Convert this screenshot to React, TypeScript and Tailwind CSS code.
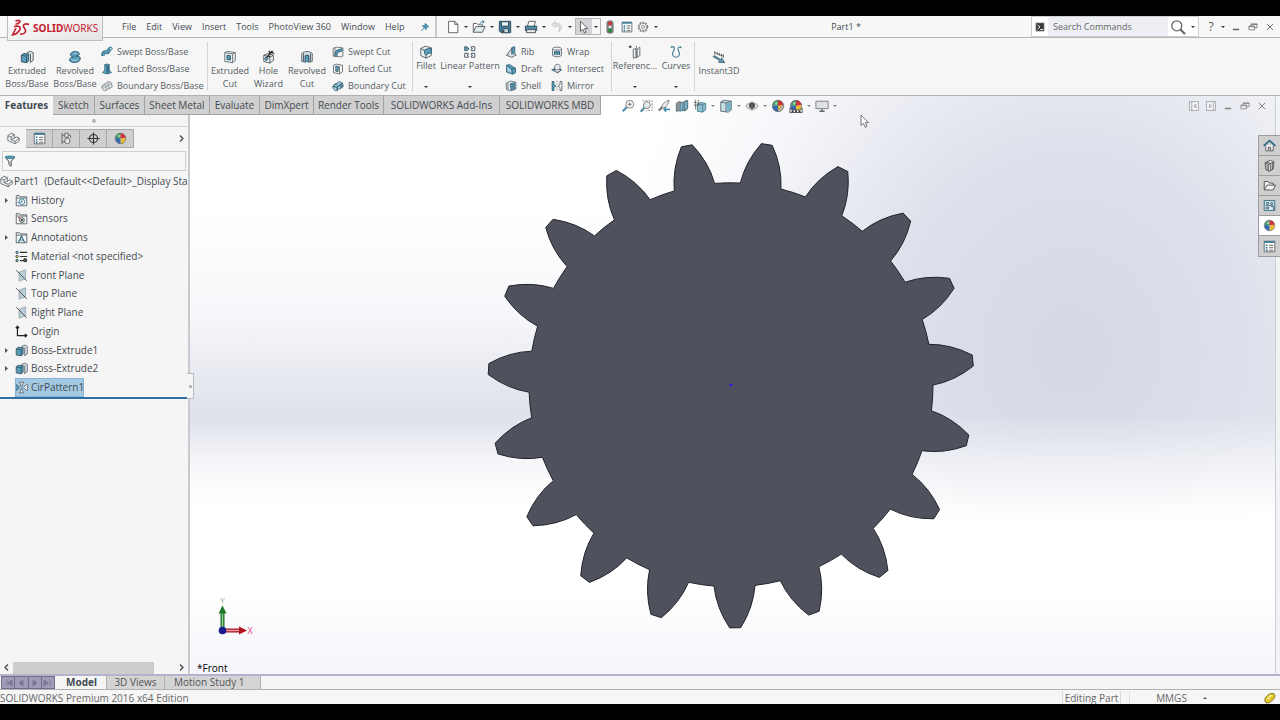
import React from "react";

type IconProps = { className?: string };
type Icon = (p: IconProps) => React.ReactElement;

const BLUE = "#5b9db8";
const DARK = "#3c4a54";

function icon(children: React.ReactNode): Icon {
  return function Glyph({ className = "size-4" }: IconProps) {
    return (
      <svg viewBox="0 0 16 16" className={`shrink-0 ${className}`} fill="none" stroke={DARK} strokeWidth="1" aria-hidden="true">
        {children}
      </svg>
    );
  };
}

/* ---------- feature icons ---------- */
const ExtrudeIcon = icon(
  <>
    <path d="M8 3l4-1.500 3 1.500v9l-4 2.500" fill="#eef2f4" />
    <path d="M12 4v9" />
    <path d="M1.500 6l2.500-2 6 .5v8L7.500 14.500l-6-1z" fill={BLUE} />
    <path d="M1.500 6l6 1 2.500-2.500M7.500 7v7.500" stroke="#24586f" />
  </>,
);
const RevolveIcon = icon(
  <>
    <path
      d="M3 4C5 1 12 1 13 4c.5 2-2 2.500-4 3 3-.5 5.500.5 5 3.500-.6 4-8.500 5-12 2C.500 10.500 3 8.500 6 8 3.500 7.500 2 6 3 4z"
      fill={BLUE}
      stroke="#24586f"
    />
    <path d="M6 4.500c1.500-1 3.500-1 4.500 0M4 11c2 1.500 6 1.500 7.500-1" stroke="#c4e0ea" />
  </>,
);
const SweepIcon = icon(
  <>
    <path d="M3 13C2 8.500 5.500 7.500 8 8.500s1-5 5.500-5.500" stroke="#2f6c86" strokeWidth="5" />
    <path d="M3 12.500C3 8.500 5.500 8 8 8.500s1-5 5-5.500" stroke={BLUE} strokeWidth="3" />
    <circle cx="13" cy="3.500" r="2" fill="#b9dbe6" stroke="#2f6c86" />
  </>,
);
const LoftIcon = icon(
  <>
    <path d="M5 2h6v6c0 2 1 3 3 4.500-3 2.500-9 2.500-12 0C4 11 5 10 5 8z" fill={BLUE} stroke="#2f5d73" />
    <path d="M9 3v10" stroke="#2f6c86" strokeWidth="3" />
    <ellipse cx="8" cy="2.500" rx="3" ry="1" fill="#a9d0de" stroke="#2f5d73" />
  </>,
);
const BoundaryIcon = icon(
  <>
    <path d="M1 9c1-4 5-3 7-6 1-1 4-1 6 1l1 5c-3 3-6 2-8 5-2 1-5 0-6-5z" fill="#dfe5e8" stroke="#6b747a" />
    <path d="M1 9c2-1 4 1 6 0 3-3 5-2 7-5M7 9v5M10 6.500l1 5M4 6l3 1 4-4" stroke="#7d878c" />
  </>,
);
const CutIcon = icon(
  <>
    <path d="M2 3l3-1.500L14 3v9l-3 2.500-9-1.500z" fill="#f3f5f6" stroke="#5c666d" />
    <path d="M2 3l9 1.500L14 3M11 4.500v10" stroke="#5c666d" />
    <path d="M4.500 6l4 .5v5l-4-.5z" fill={BLUE} stroke="#24586f" />
  </>,
);
const HoleIcon = icon(
  <>
    <path d="M2 6l5-2 6 2v6l-4 3-7-2z" fill="#e9edef" stroke="#4d575e" />
    <path d="M2 6l7 2 4-2M9 8v7" stroke="#4d575e" />
    <path d="M5 9l6-7M8 1l1 2M12 1l-1 2 3 1M7 6l2 2" stroke="#222" strokeWidth="1.500" />
    <circle cx="5" cy="10" r="1.700" fill={BLUE} stroke="#24586f" />
  </>,
);
const RevCutIcon = icon(
  <>
    <path d="M2 4c3-3 9-3 12 0v9l-4 1V6H6v8l-4-1z" fill="#cfe1e8" stroke="#4d575e" />
    <path d="M6 14V7l2-1 2 1v7" fill={BLUE} stroke="#24586f" />
    <path d="M4 4v9M12 4v9" stroke="#4d575e" />
  </>,
);
const SweptCutIcon = icon(
  <>
    <path d="M1.500 3l5-1.500 8 1v11l-3 1-10-1z" fill="#eef1f2" stroke="#4d575e" />
    <path d="M5 14c0-5 1-8 9-9" stroke="#24586f" strokeWidth="4" />
    <path d="M5 14c0-5 1-8 9-9" stroke={BLUE} strokeWidth="2" />
    <path d="M4 3v10" stroke="#4d575e" />
  </>,
);
const LoftCutIcon = icon(
  <>
    <path d="M2 3l4-1.500L14 3v9l-4 2.500-8-1.500z" fill="#f3f5f6" stroke="#4d575e" />
    <path d="M5 4l4 .5-1 7-3-.5zM10 4.500v10" fill={BLUE} stroke="#4d575e" />
  </>,
);
const BoundCutIcon = icon(
  <>
    <path d="M1 9c1-4 5-3 7-6 1-1 4-1 6 1l1 5c-3 3-6 2-8 5-2 1-5 0-6-5z" fill="#a6ccd9" stroke="#3a5a69" />
    <path d="M1 9c2-1 4 1 6 0 3-3 5-2 7-5M7 9v5M3 6l4-1M11 10l3-3" stroke="#24586f" strokeWidth="1.500" />
  </>,
);
const FilletIcon = icon(
  <>
    <path d="M2 4l5-2.500L14 3v9l-6 3-6-3z" fill="#eef1f2" stroke="#4d575e" />
    <path d="M6 6c2-2 6-2 8-2v5c-2 0-5 1-6 3-1-1-2-3-2-6z" fill={BLUE} stroke="#24586f" />
    <path d="M2 4l4 2M8 12v3" />
  </>,
);
const PatternIcon = icon(
  <>
    <path d="M2 2h2l3 2.300L4 6.500H2z" fill={BLUE} />
    <path d="M9.500 2h4v4.500h-4V5l1.500-.7-1.500-.8zM2 9.500h4V11l-1.500.7L6 12.500V14H2zM9.500 9.500h4V14h-4v-1.500l1.500-.8-1.500-.7z" fill="#fff" />
  </>,
);
const RibIcon = icon(
  <>
    <path d="M9 2l4-1v10l-4 3z" fill={BLUE} stroke="#24586f" />
    <path d="M9 3L3 11l6 3z" fill="#cfe1e8" />
    <path d="M1 12l8 3 6-3-2-1" fill="#dfe5e8" />
  </>,
);
const DraftIcon = icon(
  <>
    <path d="M2 3l4-1 8 5v6l-4 2-8-3z" fill={BLUE} stroke="#24586f" />
    <path d="M2 3l7 5 5-1M9 8l1 7" stroke="#24586f" />
    <path d="M3 4.500l5 4 .500 4.500L3 11z" fill="#a9d0de" stroke="none" />
  </>,
);
const ShellIcon = icon(
  <>
    <path d="M1.500 4l6-2.500L14.500 3v9L8 14.500l-6-2z" fill="#eef1f2" stroke="#4d575e" />
    <path d="M7 5l6-1.500v8L8 13z" fill={BLUE} stroke="#24586f" />
    <path d="M4 4v9M9 5l2 5" stroke="#4d575e" />
  </>,
);
const WrapIcon = icon(
  <>
    <path d="M2 3.500v9c2 2.500 10 2.500 12 0v-9" fill="#dfe5e8" stroke="#4d575e" />
    <ellipse cx="8" cy="3.500" rx="6" ry="2" fill="#f6f7f8" stroke="#4d575e" />
    <path d="M4 8h8M5 8v4M8 8v4M11 8v4" stroke="#2f6c86" strokeWidth="2" />
  </>,
);
const IntersectIcon = icon(
  <>
    <path d="M1 9l5-2 8 2-5 4z" fill={BLUE} stroke="#24586f" />
    <path d="M5 11V4c1-3 7-3 7 0v7c-2 1.500-5 1.500-7 0z" fill="#e9edef" stroke="#4d575e" />
    <path d="M5 8c2 1.500 5 1.500 7 0" stroke="#4d575e" />
  </>,
);
const MirrorIcon = icon(
  <>
    <path d="M1.500 2v12H4v-4l2.500-2L4 6V2z" fill={BLUE} stroke="#24586f" />
    <path d="M14.500 2v12H12v-4L9.500 8 12 6V2z" fill="#fff" />
    <path d="M8 1v14" strokeDasharray="2 1.500" stroke="#777" />
  </>,
);
const RefIcon = icon(
  <>
    <path d="M1 2h3M2.500.500v3" strokeWidth="1.500" />
    <path d="M6 5l3-1v10l-3 1zM10.500 4.500l3-2v9.500l-3 2z" stroke="#59636a" />
    <path d="M9.700 1v14" stroke="#59636a" strokeDasharray="2 1" />
  </>,
);
const CurvesIcon = icon(
  <path d="M2 2c5-1 5 2 3 5s-1 7 3 7 5-4 3-7 0-5 3-5M2 2l1.500 1M14 2l-1 1.500" stroke="#4b7f97" strokeWidth="1.300" />,
);
const InstantIcon = icon(
  <>
    <path d="M3 1.500v3.500M13 5v4M3 3l10 4M6 2.500v3M8.500 3.500v3M11 4.500v3" stroke="#555" />
    <path d="M1 7.500l8 4.500-1.500 2 7 .5-3.500-5.500-1 2L3 6.500z" fill={BLUE} stroke="#3a5a69" />
  </>,
);

/* ---------- title bar icons ---------- */
const PinIcon = icon(
  <>
    <path d="M8.500 2l5.500 5.500-2 .5-2 2 0 2.500L3.500 6H6l2-2z" fill="#4b93b4" stroke="#2f7393" />
    <path d="M6 10l-4 4" stroke="#2f7393" strokeWidth="1.500" />
  </>,
);
const NewIcon = icon(<path d="M3 1.500h7l3.500 3.500v9.500H3zM10 1.500V5h3.500" fill="#fff" stroke="#555" />);
const OpenIcon = icon(
  <>
    <path d="M1.500 14V4h4l1.500 1.500h5V8" fill="#fff" stroke="#555" />
    <path d="M1.500 14l3-6.500H15L12 14z" fill="#e2ecef" stroke="#4d575e" />
    <path d="M9 5c0-2.500 2-3 4-3M11.500.5L14 2l-2 2" stroke="#2f7393" />
  </>,
);
const SaveIcon = icon(
  <>
    <path d="M1.500 1.500h13v13h-11l-2-2z" fill="#3f7f9b" stroke="#2b4655" />
    <path d="M4 2h8v5H4z" fill="#e8f0f3" stroke="#2b4655" />
    <path d="M5 10h7v4.500H5z" fill="#cfd8dc" stroke="#2b4655" />
    <path d="M6.500 11v3" stroke="#2b4655" strokeWidth="1.500" />
  </>,
);
const PrintIcon = icon(
  <>
    <path d="M4 7l1.500-5.500H13L11.500 7" fill="#fff" stroke="#555" />
    <path d="M1.500 7h13v5h-13z" fill="#4b8eaa" stroke="#2b4655" />
    <path d="M3 11h10v3.500H3z" fill="#e8eef0" stroke="#444" />
  </>,
);
const UndoIcon = icon(<path d="M6 1.500L2 5l4 3.500V6.500c5-.5 6 2 4 7 5-4 4-10-4-9.500z" fill="#e3e4e6" stroke="#c0c2c6" />);
const ArrowIcon = icon(
  <path d="M4 1.500v11.500l2.700-2.500L8.500 15l2-1-1.900-4.200H12.500z" fill="#fff" stroke="#555" />,
);
const TrafficIcon = icon(
  <>
    <rect x="4.500" y="1" width="7" height="14" rx="2.500" fill="#8b9094" stroke="#666" />
    <circle cx="8" cy="4" r="2.200" fill="#cf2f2f" stroke="none" />
    <circle cx="8" cy="8" r="1.500" fill="#e8e8e8" stroke="none" />
    <circle cx="8" cy="12" r="2.200" fill="#1f8a3c" stroke="none" />
  </>,
);
const ListIcon = icon(
  <>
    <path d="M1.500 1.500h13v13h-13z" fill="#fff" stroke="#4d575e" />
    <path d="M1.500 2.500h13" stroke="#2f7393" strokeWidth="2" />
    <path d="M3.500 6.500h2M3.500 9.500h2M3.500 12.500h2" stroke="#2f7393" strokeWidth="2" />
    <path d="M7.500 6.500h5M7.500 9.500h5M7.500 12.500h5" stroke="#444" />
  </>,
);
const GearIcon = icon(
  <>
    <circle cx="8" cy="8" r="6.300" stroke="#777" strokeWidth="1.500" strokeDasharray="2.500 1.500" />
    <circle cx="8" cy="8" r="5" stroke="#777" />
    <circle cx="8" cy="8" r="2" stroke="#777" />
  </>,
);
const PromptIcon = icon(
  <>
    <path d="M1.500 1.500h13v13h-13z" fill="#3a3a3a" stroke="#888" />
    <path d="M4 4.500L8 8l-4 3.500M8.500 12H13" stroke="#fff" strokeWidth="1.500" />
  </>,
);
const SearchIcon = icon(
  <>
    <circle cx="6.800" cy="6.800" r="5" stroke="#666" strokeWidth="1.300" fill="#fff" />
    <path d="M10.500 10.500l4.500 4.500" stroke="#666" strokeWidth="2.200" />
  </>,
);
const MinIcon = icon(<path d="M3 12h10" stroke="#666" strokeWidth="2.500" />);
const RestoreIcon = icon(<path d="M1.500 6.500h9v6h-9zM5 6.500V3h9.500v6h-4M1.500 7.500h9M5 4h9.500" stroke="#666" strokeWidth="1.200" />);
const CloseIcon = icon(<path d="M3 3l10 10M13 3L3 13" stroke="#666" strokeWidth="1.500" />);
const DockLeftIcon = icon(<path d="M2 2h12v12H2zM5 2v12M10.500 5.500L8 8l2.500 2.500z" stroke="#888" fill="#f4f4f6" />);
const DockRightIcon = icon(<path d="M2 2h12v12H2zM11 2v12M6 5.500L8.500 8 6 10.500z" stroke="#888" fill="#f4f4f6" />);

/* ---------- heads-up icons ---------- */
const ZoomFitIcon = icon(
  <>
    <circle cx="10" cy="6" r="4.500" fill="#f5f5f5" stroke="#777" />
    <path d="M6.500 9.500L2 14" stroke="#4f8ea9" strokeWidth="2.500" />
    <path d="M8 6h4M10 4v4" stroke="#666" />
  </>,
);
const ZoomAreaIcon = icon(
  <>
    <path d="M4 2h11v11H8" stroke="#777" strokeDasharray="2 1.500" />
    <circle cx="9" cy="7" r="4" fill="#dce9ee" stroke="#777" />
    <path d="M6 10l-4 4.500" stroke="#4f8ea9" strokeWidth="2.500" />
  </>,
);
const PrevViewIcon = icon(
  <>
    <path d="M14 1.500C10 2 6 6 5 9l3 1c2-1 5-4 6-8.500z" fill="#eee" stroke="#777" />
    <path d="M6 9.500L2 13" stroke="#777" strokeWidth="2.500" />
    <path d="M15 12H8m2.500-2.500L8 12l2.500 2.500" stroke="#3f89a8" strokeWidth="1.600" />
  </>,
);
const SectionIcon = icon(
  <>
    <path d="M1.500 5l3-2 4 1 5-2.500 1 .5v9l-3 2.500-4-.5-6 1z" fill="#8b979e" stroke="#59636a" />
    <path d="M6 5l3-1v9l-3 1zM11 4l3-2v8.500L11 13z" fill="#86bdd1" stroke="#4d7f94" />
  </>,
);
const OrientIcon = icon(
  <>
    <path d="M5 5.500L8 4l6.500 1v7.500L11 15l-6-1z" fill="#8fc1d3" stroke="#4d7f94" />
    <path d="M5 5.500l6 1 3.500-1.500M11 6.500V15" stroke="#4d7f94" />
    <path d="M1 7h7M1 4h3M6 1v6M3 1v11" stroke="#666" />
  </>,
);
const DisplayIcon = icon(
  <>
    <path d="M2 3.500L5 1.500l9 1v10L10.500 15 2 14z" fill="#c5dfe8" stroke="#59636a" />
    <path d="M2 3.500l6 1 6-2M8 4.500V15" stroke="#59636a" />
    <path d="M8.500 5l5-2v9.500L8.500 14z" fill="#74b1c9" stroke="none" />
  </>,
);
const EyeIcon = icon(
  <>
    <path d="M1 8c3-5 11-5 14 0-3 5-11 5-14 0z" fill="#e6e6e6" stroke="#888" />
    <circle cx="8" cy="7.500" r="3" fill="#555" stroke="#444" />
    <path d="M8 3v10" stroke="#666" />
  </>,
);
const ball = (
  <>
    <path d="M8 8V1.500A6.500 6.500 0 0 0 1.800 7z" fill="#3e9c5c" stroke="none" />
    <path d="M8 8V1.500A6.500 6.500 0 0 1 14.300 7z" fill="#d5333b" stroke="none" />
    <path d="M8 8l6.300-1A6.500 6.500 0 0 1 8 14.500z" fill="#e8bd35" stroke="none" />
    <path d="M8 8L1.800 7A6.500 6.500 0 0 0 8 14.500z" fill="#3569b2" stroke="none" />
    <circle cx="8" cy="8" r="6.500" stroke="#555" strokeWidth=".700" />
    <circle cx="6" cy="5" r="1.500" fill="#fff" fillOpacity=".5" stroke="none" />
  </>
);
const BallIcon = icon(ball);
const AppearanceIcon = icon(
  <>
    {ball}
    <path d="M15 8l-5 6-2 .5.5-2 5-5.500z" fill="#d9dee0" stroke="#666" strokeWidth=".800" />
  </>,
);
const SceneIcon = icon(
  <>
    {ball}
    <path d="M1 15.500v-5l3 2h8l3-2v5z" fill="#f4f4f4" stroke="#444" />
    <path d="M3 14h2M7 14h2M11 14h2" stroke="#222" strokeWidth="2" />
  </>,
);
const MonitorIcon = icon(
  <>
    <path d="M1 2.500h14v8.500H1z" fill="#dfe3e6" stroke="#777" />
    <path d="M8 11v3M5 14h6" stroke="#666" strokeWidth="1.500" />
  </>,
);

/* ---------- tree icons ---------- */
const PartIcon = icon(
  <>
    <path d="M1 4.500L5 1.500l4 1.500v4.500L12 6l3 1.500V11l-5 3.500-9-4z" fill="#f0f2f3" stroke="#59636a" />
    <path d="M1 4.500l4 1.700L9 3M5 6.200v3.300l5 2 5-4M10 11.500v3M9 7.500L5 9.500" stroke="#59636a" />
  </>,
);
const folder = <path d="M1.500 14.500V2h4l1 1.500h8v11zM1.500 5h13" fill="#f2f4f5" stroke="#4d575e" />;
const HistoryIcon = icon(
  <>
    {folder}
    <circle cx="8.500" cy="9.500" r="3.500" stroke="#2f7393" />
    <path d="M8.500 7.500v2.500H6M3 10l2 1.500" stroke="#2f7393" />
  </>,
);
const SensorIcon = icon(
  <>
    {folder}
    <circle cx="8.500" cy="10" r="3" stroke="#444" />
    <circle cx="8.500" cy="10" r="1.200" fill="#333" />
    <path d="M4 7h2" stroke="#b03a3a" strokeWidth="2" />
  </>,
);
const AnnotIcon = icon(
  <>
    {folder}
    <path d="M4.500 13.500L8 6l3.500 7.500M6 11h4M3.500 13.500h2M10.500 13.500h2" stroke="#2f6c86" strokeWidth="1.300" />
  </>,
);
const MaterialIcon = icon(
  <>
    <circle cx="2.500" cy="3" r="1.500" fill="#86bdd1" />
    <circle cx="2.500" cy="8" r="1.500" fill="#d7c24a" />
    <circle cx="2.500" cy="13" r="1.500" fill="#6fae74" />
    <path d="M6 3h9M6 8h9M6 13h5" stroke="#333" strokeWidth="1.400" />
    <circle cx="12.500" cy="12.500" r="2" fill="#555" stroke="#222" />
  </>,
);
const PlaneIcon = icon(
  <>
    <path d="M5 4l8-3v11l-8 3z" fill="#b8cdd6" stroke="#93a6ae" />
    <path d="M1.500 1.500l13 13" stroke="#555" strokeWidth="1.200" />
  </>,
);
const OriginIcon = icon(
  <path d="M3 2v11h11M1 4l2-2.500L5 4M12 11l2.500 2L12 15" stroke="#222" strokeWidth="1.500" />,
);
const CirIcon = icon(
  <>
    <path d="M.500 4.500h1.500L5 8l-3 3.500H.500z" fill={BLUE} />
    <path d="M5 1.500h6L9 4v2.500H7V4zM5 14.500h6L9 12V9.500H7V12z" fill="#e8eef1" stroke="#59636a" />
    <path d="M15.500 4.500v7H14L10.500 8 14 4.500z" fill="#e8eef1" stroke="#59636a" />
  </>,
);
const ConfigIcon = icon(
  <>
    <path d="M2.500 1v14M2.500 4H6M2.500 12H6" stroke="#555" />
    <path d="M6 1.500h4v5H6zM6 9l3-1.500 3 1.500v4l-3 1.500L6 13zM10 4h3v3" fill="#e6eaec" stroke="#555" />
  </>,
);
const TargetIcon = icon(
  <>
    <circle cx="8" cy="8" r="5" stroke="#333" strokeWidth="1.300" />
    <path d="M8 .500v15M.500 8h15" stroke="#333" strokeWidth="1.300" />
  </>,
);
const FilterIcon = icon(
  <>
    <path d="M1.500 3h13L9.500 8.500V15L6.500 12.500v-4z" fill="#eef2f4" stroke="#444" strokeWidth="1.300" />
    <ellipse cx="8" cy="3" rx="6.500" ry="1.700" fill={BLUE} stroke="#2f6c86" />
  </>,
);

/* ---------- task pane icons ---------- */
const HomeIcon = icon(
  <>
    <path d="M3.500 8v6.500h9V8" fill="#fff" stroke="#444" />
    <path d="M.800 8.500L8 2l7.200 6.500" stroke="#2f6c86" strokeWidth="2.200" />
    <path d="M6.500 14.500V10h3v4.500" fill="#bbb" stroke="#444" />
  </>,
);
const LibraryIcon = icon(
  <>
    <path d="M2.500 4.500L9 1.500l4.500 2-1 9L7.500 15l-4-2z" fill="#e8eaeb" stroke="#444" />
    <path d="M2.500 4.500L7 6.500l6.500-3M7 6.500V15M5 5.500v8M9.500 5.500V14M11.500 4.500V13M4.700 3.500l4.500 2" stroke="#444" />
  </>,
);
const FolderIcon = icon(
  <path d="M1.500 13.500V3h4.500l1.500 2h5v3M1.500 13.500L5 7.500h10.500l-3 6z" fill="#f3f3f3" stroke="#555" strokeWidth="1.200" />,
);
const PaletteIcon = icon(
  <>
    <path d="M1.500 2h13v12h-13z" fill="#e4eef2" stroke="#2f6c86" strokeWidth="1.200" />
    <path d="M4 4.500h3v2H4zM9.500 4.500H12v2H9.500zM4 10h3v2H4zM10 9.500h3V14M3 8.200h10" stroke="#2a5c73" />
  </>,
);

/* ---------- shared parts ---------- */
function Caret({ className = "w-2.5" }: { className?: string }) {
  return (
    <span className={`flex shrink-0 justify-center self-center ${className}`}>
      <svg viewBox="0 0 4 2" className="h-0.5 w-1" aria-hidden="true">
        <path d="M0 0h4L2 2z" fill="#333" />
      </svg>
    </span>
  );
}

function IconButton({ label, icon: I, className = "w-4", size = "size-3.5" }: { label: string; icon: Icon; className?: string; size?: string }) {
  return (
    <button type="button" aria-label={label} className={`flex shrink-0 items-center justify-center ${className}`}>
      <I className={size} />
    </button>
  );
}

function BigButton({ lines, icon: I, width, menu }: { lines: string[]; icon: Icon; width: string; menu?: boolean }) {
  return (
    <button
      type="button"
      className={`flex h-full shrink-0 flex-col items-center whitespace-nowrap text-[9px] leading-[13px] ${width} ${menu ? "pt-[7px]" : "pt-3"}`}
    >
      <I className="size-3.5" />
      {lines.map((l) => (
        <span key={l}>{l}</span>
      ))}
      {menu && (
        <span className="mt-3.5 flex">
          <Caret />
        </span>
      )}
    </button>
  );
}

function SmallColumn({ items, className }: { items: [string, Icon][]; className: string }) {
  return (
    <div className={`flex h-full shrink-0 flex-col pt-[5px] ${className}`}>
      {items.map(([label, I]) => (
        <button key={label} type="button" className="flex h-[17px] items-center gap-1 whitespace-nowrap text-[9px]">
          <I className="size-3" />
          {label}
        </button>
      ))}
    </div>
  );
}

function Divider() {
  return <div className="my-1 w-px shrink-0 bg-[#d4d4d4]" />;
}

/* ---------- title bar ---------- */
function Logo() {
  return (
    <div className="relative z-10 -mb-1 ml-[7px] flex h-[25px] w-24 shrink-0 items-center gap-[3px] self-start border border-t-0 border-[#bdbdbd] bg-linear-to-br from-white to-[#e4e4e6] pl-[3px] font-['Noto_Sans',sans-serif] text-[10px] text-[#c4202e]">
      <svg viewBox="0 0 19 18" className="h-[18px] w-[19px] shrink-0" fill="none" stroke="#c4202e" strokeWidth="1.600" aria-hidden="true">
        <path d="M4.500 2C8 .800 10 1.500 8.500 3.500 7.800 4.500 6 5 4.500 5.200" />
        <path d="M3 7.500c6-1.200 7.500 1 5 4.500-1.700 2.400-4 3.600-6.500 4L5 9" />
        <path d="M18 5.500c-3.500-1.500-7 0-5 3 1.500 2.200 2.500 3.500.500 5.500-1 .900-2.500 1.300-4.500 1" />
      </svg>
      <span className="leading-3">
        <b>SOLID</b>WORKS
      </span>
    </div>
  );
}

function TitleBar() {
  const menus = ["File", "Edit", "View", "Insert", "Tools", "PhotoView 360", "Window", "Help"];
  return (
    <header className="flex h-[22px] shrink-0 items-stretch border-b border-[#b4b4b4] bg-[#f7f7f7]">
      <div className="flex w-[437px] shrink-0 items-center border-r-2 border-[#c9c9c9]">
        <Logo />
        <nav className="ml-[19px] flex gap-2.5 text-[9px] whitespace-nowrap">
          {menus.map((m) => (
            <button key={m} type="button">
              {m}
            </button>
          ))}
        </nav>
        <IconButton label="Pin menu" icon={PinIcon} className="mr-0.5 ml-auto w-4" size="size-2.5" />
      </div>
      <div className="flex shrink-0 items-center pl-2">
        <IconButton label="New" icon={NewIcon} />
        <Caret />
        <IconButton label="Open" icon={OpenIcon} />
        <Caret />
        <IconButton label="Save" icon={SaveIcon} />
        <Caret />
        <IconButton label="Print" icon={PrintIcon} />
        <Caret />
        <IconButton label="Undo" icon={UndoIcon} />
        <Caret />
        <div className="flex h-[17px] items-center border border-[#b5b5b5]">
          <IconButton label="Select" icon={ArrowIcon} className="h-full w-4 bg-[#d2d3d6]" />
          <Caret className="w-2" />
        </div>
        <IconButton label="Rebuild" icon={TrafficIcon} className="w-[17px]" />
        <IconButton label="File properties" icon={ListIcon} className="w-[17px]" size="size-3" />
        <IconButton label="Options" icon={GearIcon} size="size-3" />
        <Caret />
      </div>
      <h1 className="flex-1 self-center text-center text-[9px]">Part1 *</h1>
      <div className="flex w-[168px] shrink-0 items-stretch border border-[#d0d0d4] bg-white">
        <span className="flex w-4 items-center justify-center">
          <PromptIcon className="size-2.5" />
        </span>
        <input
          type="text"
          aria-label="Search Commands"
          placeholder="Search Commands"
          className="w-[120px] bg-[#eeeff4] pl-[5px] text-[9px] placeholder:text-[#666] outline-none"
        />
        <IconButton label="Search" icon={SearchIcon} className="w-5" size="size-4" />
        <Caret />
      </div>
      <div className="flex w-[81px] shrink-0 items-center pl-1">
        <button type="button" className="w-4 text-[12px] text-[#555]">
          ?
        </button>
        <Caret className="w-2" />
        <div className="flex">
          <IconButton label="Minimize" icon={MinIcon} className="w-[17px]" size="size-2.5" />
          <IconButton label="Restore" icon={RestoreIcon} className="w-[17px]" size="size-2.5" />
          <IconButton label="Close" icon={CloseIcon} className="w-[17px]" size="size-2.5" />
        </div>
      </div>
    </header>
  );
}

/* ---------- ribbon ---------- */
function Ribbon() {
  return (
    <div className="flex h-[58px] shrink-0 border-b border-[#b0b0b0] bg-[#f6f6f6] pl-[3px] text-[#555d63]">
      <BigButton lines={["Extruded", "Boss/Base"]} icon={ExtrudeIcon} width="w-12" />
      <BigButton lines={["Revolved", "Boss/Base"]} icon={RevolveIcon} width="w-12" />
      <SmallColumn
        className="w-[108px] pl-0.5"
        items={[
          ["Swept Boss/Base", SweepIcon],
          ["Lofted Boss/Base", LoftIcon],
          ["Boundary Boss/Base", BoundaryIcon],
        ]}
      />
      <Divider />
      <BigButton lines={["Extruded", "Cut"]} icon={CutIcon} width="w-11" />
      <BigButton lines={["Hole", "Wizard"]} icon={HoleIcon} width="w-[33px]" />
      <BigButton lines={["Revolved", "Cut"]} icon={RevCutIcon} width="w-11" />
      <SmallColumn
        className="w-[83px] pl-[3px]"
        items={[
          ["Swept Cut", SweptCutIcon],
          ["Lofted Cut", LoftCutIcon],
          ["Boundary Cut", BoundCutIcon],
        ]}
      />
      <Divider />
      <BigButton lines={["Fillet"]} icon={FilletIcon} width="w-[26px]" menu />
      <BigButton lines={["Linear Pattern"]} icon={PatternIcon} width="w-[62px]" menu />
      <SmallColumn
        className="w-[46px] pl-1"
        items={[
          ["Rib", RibIcon],
          ["Draft", DraftIcon],
          ["Shell", ShellIcon],
        ]}
      />
      <SmallColumn
        className="w-16 pl-1"
        items={[
          ["Wrap", WrapIcon],
          ["Intersect", IntersectIcon],
          ["Mirror", MirrorIcon],
        ]}
      />
      <Divider />
      <BigButton lines={["Referenc..."]} icon={RefIcon} width="w-[46px]" menu />
      <BigButton lines={["Curves"]} icon={CurvesIcon} width="w-9" menu />
      <Divider />
      <BigButton lines={["Instant3D"]} icon={InstantIcon} width="w-12" />
    </div>
  );
}

/* ---------- command tabs and heads-up toolbar ---------- */
const tabs: [string, string][] = [
  ["Sketch", "w-[42px]"],
  ["Surfaces", "w-[50px]"],
  ["Sheet Metal", "w-[65px]"],
  ["Evaluate", "w-[50px]"],
  ["DimXpert", "w-[54px]"],
  ["Render Tools", "w-[70px]"],
  ["SOLIDWORKS Add-Ins", "w-[116px]"],
  ["SOLIDWORKS MBD", "w-[101px]"],
];

function TabRow() {
  return (
    <div className="flex h-[19px] shrink-0 items-stretch">
      <div role="tablist" className="flex shrink-0 text-[10px] whitespace-nowrap">
        <button type="button" role="tab" aria-selected className="w-[53px] bg-[#f6f6f6] font-['Noto_Sans',sans-serif] font-bold">
          Features
        </button>
        {tabs.map(([t, w]) => (
          <button
            key={t}
            type="button"
            role="tab"
            aria-selected={false}
            className={`flex items-center justify-center border-r border-b border-[#a3a3a3] bg-[#d0d0d0] ${w}`}
          >
            {t}
          </button>
        ))}
      </div>
      <div className="ml-[18px] flex items-center">
        <IconButton label="Zoom to fit" icon={ZoomFitIcon} className="w-[18px]" />
        <IconButton label="Zoom to area" icon={ZoomAreaIcon} className="w-[18px]" />
        <IconButton label="Previous view" icon={PrevViewIcon} className="w-[18px]" />
        <IconButton label="Section view" icon={SectionIcon} className="w-[18px]" />
        <IconButton label="View orientation" icon={OrientIcon} className="w-[18px]" />
        <Caret className="w-2 opacity-60" />
        <IconButton label="Display style" icon={DisplayIcon} className="w-[18px]" />
        <Caret className="w-2 opacity-60" />
        <IconButton label="Hide or show items" icon={EyeIcon} className="w-[18px]" />
        <Caret className="w-2 opacity-60" />
        <IconButton label="Edit appearance" icon={AppearanceIcon} className="w-[18px]" />
        <IconButton label="Apply scene" icon={SceneIcon} className="w-[18px]" />
        <Caret className="w-2 opacity-60" />
        <IconButton label="View settings" icon={MonitorIcon} className="w-[18px]" />
        <Caret className="w-2 opacity-60" />
      </div>
      <div className="ml-auto flex items-center pt-px pr-[5px] opacity-80">
        <IconButton label="Dock left" icon={DockLeftIcon} className="w-[17px]" size="size-3" />
        <IconButton label="Dock right" icon={DockRightIcon} className="w-[17px]" size="size-3" />
        <IconButton label="Minimize document" icon={MinIcon} className="w-[17px]" size="size-2.5" />
        <IconButton label="Restore document" icon={RestoreIcon} className="w-[17px]" size="size-2.5" />
        <IconButton label="Close document" icon={CloseIcon} className="w-[17px]" size="size-2.5" />
      </div>
    </div>
  );
}

/* ---------- feature manager ---------- */
const tree: { label: string; icon: Icon; open?: boolean; selected?: boolean }[] = [
  { label: "History", icon: HistoryIcon, open: true },
  { label: "Sensors", icon: SensorIcon },
  { label: "Annotations", icon: AnnotIcon, open: true },
  { label: "Material <not specified>", icon: MaterialIcon },
  { label: "Front Plane", icon: PlaneIcon },
  { label: "Top Plane", icon: PlaneIcon },
  { label: "Right Plane", icon: PlaneIcon },
  { label: "Origin", icon: OriginIcon },
  { label: "Boss-Extrude1", icon: ExtrudeIcon, open: true },
  { label: "Boss-Extrude2", icon: ExtrudeIcon, open: true },
  { label: "CirPattern1", icon: CirIcon, selected: true },
];

const panelTabs: [string, Icon][] = [
  ["Property manager", ListIcon],
  ["Configuration manager", ConfigIcon],
  ["DimXpert manager", TargetIcon],
  ["Display manager", BallIcon],
];

function Chevron({ flip }: { flip?: boolean }) {
  return (
    <svg viewBox="0 0 5 7" className="h-[7px] w-[5px]" fill="none" stroke="#444" strokeWidth="1.200" aria-hidden="true">
      <path d={flip ? "M4 .500L1 3.500l3 3" : "M1 .500l3 3-3 3"} />
    </svg>
  );
}

function FeaturePanel() {
  return (
    <aside className="relative flex w-[190px] shrink-0 flex-col border-r-2 border-[#c9cacd] bg-[#f5f5f5]">
      <div className="flex h-3 items-center justify-center border-b border-[#d5d5d5]">
        <span className="size-1 rounded-full bg-[#b4b4b4]" />
      </div>
      <div className="mt-0.5 flex h-[19px] shrink-0">
        <IconButton label="Feature tree" icon={PartIcon} className="w-[26px]" size="size-[13px]" />
        {panelTabs.map(([label, I]) => (
          <IconButton key={label} label={label} icon={I} className="w-[27px] border border-l-0 border-[#a8a8a8] bg-[#cfcfcf]" size="size-[13px]" />
        ))}
        <button type="button" aria-label="More tabs" className="mr-1 ml-auto">
          <Chevron />
        </button>
      </div>
      <label className="mx-0.5 mt-[3px] flex h-5 shrink-0 items-center border border-[#cfcfcf] bg-[#f8f8f8] pl-px">
        <FilterIcon className="size-3" />
        <input type="text" aria-label="Filter" className="min-w-0 flex-1 bg-transparent text-[10px] outline-none" />
      </label>
      <ul className="mt-px grid h-[227px] shrink-0 auto-rows-fr border-b-2 border-[#2f6ea5] text-[10px] whitespace-nowrap">
        <li className="flex items-center gap-px">
          <PartIcon className="size-[13px]" />
          <span className="whitespace-pre">Part1  (Default&lt;&lt;Default&gt;_Display Sta</span>
        </li>
        {tree.map(({ label, icon: I, open, selected }) => (
          <li key={label} className="flex items-center">
            <span className="flex w-[15px] pl-[5px]">
              {open && (
                <svg viewBox="0 0 3 5" className="h-[5px] w-[3px]" aria-hidden="true">
                  <path d="M0 0l3 2.500L0 5z" fill="#555" />
                </svg>
              )}
            </span>
            <span className={`flex h-full items-center gap-[3px] ${selected ? "bg-[#a3c8e2] outline outline-1 -outline-offset-1 outline-[#86b3d4]" : ""}`}>
              <I className="size-[13px]" />
              {label}
            </span>
          </li>
        ))}
      </ul>
      <div className="mt-auto flex h-3 shrink-0 items-center gap-1 px-1 pb-px">
        <Chevron flip />
        <div className="h-3 flex-1 pr-[21px]">
          <div className="h-full bg-[#cdcdcd]" />
        </div>
        <Chevron />
      </div>
      <button
        type="button"
        aria-label="Collapse panel"
        className="absolute top-[258px] -right-[6px] z-10 flex h-[26px] w-[7px] items-center justify-center border border-l-0 border-[#b9babd] bg-[#f5f5f5]"
      >
        <span className="size-[3px] rounded-full bg-[#aaa]" />
      </button>
    </aside>
  );
}

/* ---------- model ---------- */
const TEETH = 19;
const ROOT_R = 202;

function gearPath(cx: number, cy: number): string {
  const parts: string[] = [];
  for (let k = 0; k < TEETH; k++) {
    const a = ((89 + (360 / TEETH) * k) * Math.PI) / 180;
    const pt = (r: number, side: number) =>
      `${(cx + r * Math.cos(a) - side * Math.sin(a)).toFixed(1)} ${(cy + r * Math.sin(a) + side * Math.cos(a)).toFixed(1)}`;
    parts.push(`${k === 0 ? "M" : `A${ROOT_R} ${ROOT_R} 0 0 1 `}${pt(201, -20.5)}`);
    parts.push(`Q${pt(223, -18.5)} ${pt(243, -5.5)}L${pt(243, 5.5)}Q${pt(223, 18.5)} ${pt(201, 20.5)}`);
  }
  return `${parts.join("")}A${ROOT_R} ${ROOT_R} 0 0 1 ${parts[0].slice(1)}Z`;
}

function Viewport() {
  return (
    <main className="relative flex min-w-0 flex-1 flex-col justify-end">
      <svg viewBox="190 115 1085 559" className="absolute inset-0 size-full" role="img" aria-label="Gear model, front view">
        <path d={gearPath(731, 384.8)} fill="#4f515d" stroke="#22232b" strokeWidth="1" />
        <path d="M728.500 384h5l-2.500 3z" fill="#3a22c8" />
        <path d="M861 115v10.500l2.500-2.200 1.700 4 1.800-.8-1.700-3.800h3.200z" fill="#fff" stroke="#666" strokeWidth=".900" />
      </svg>
      <svg viewBox="0 -4 44 48" className="ml-6 h-12 w-11" aria-label="Axes">
        <path d="M8.500 34V17" stroke="#1d6b25" strokeWidth="4" />
        <path d="M8.500 34V17" stroke="#8fd08f" strokeWidth="1.500" />
        <path d="M4.500 17.500l4-8 4 8z" fill="#1f7a2a" />
        <path d="M10 34.500h16" stroke="#a31220" strokeWidth="4" />
        <path d="M10 34.500h16" stroke="#f0a0a6" strokeWidth="1.500" />
        <path d="M25 30.500l8 4-8 4z" fill="#b3121f" />
        <circle cx="8.500" cy="34.500" r="3.800" fill="#1b1b8f" />
        <text x="8.500" y="6.500" textAnchor="middle" fontSize="8" fill="#7a9c7a">
          Y
        </text>
        <text x="36" y="37.500" textAnchor="middle" fontSize="9" fill="#e0457a">
          X
        </text>
      </svg>
      <p className="mt-[22px] pl-[7px] text-[10px] leading-3 text-black">*Front</p>
    </main>
  );
}

function TaskPane() {
  const items: [string, Icon][] = [
    ["Resources", HomeIcon],
    ["Design library", LibraryIcon],
    ["File explorer", FolderIcon],
    ["View palette", PaletteIcon],
    ["Appearances", BallIcon],
    ["Custom properties", ListIcon],
  ];
  return (
    <div className="absolute top-[39px] right-0 z-10 flex w-[22px] flex-col border border-r-0 border-[#9d9d9d]">
      {items.map(([label, I]) => (
        <IconButton
          key={label}
          label={label}
          icon={I}
          size="size-[13px]"
          className={`h-5 w-full border-b border-[#9d9d9d] last:border-b-0 ${label === "Appearances" ? "bg-white" : "bg-[#cfcfcf]"}`}
        />
      ))}
    </div>
  );
}

/* ---------- footer ---------- */
function BottomTabs() {
  const nav = ["M4 2v6M9 2L5 5l4 3z", "M7 2L3 5l4 3z", "M3 2l4 3-4 3z", "M1 2l4 3-4 3zM7 2v6"];
  return (
    <div className="flex h-4 shrink-0 items-stretch border-t-2 border-b border-t-[#b5b2cc] border-b-[#b0b0b0] bg-[#f5f5f5] text-[10px] whitespace-nowrap">
      <div className="ml-px flex w-[54px] divide-x divide-[#6f6c8c] border border-[#6f6c8c] bg-[#9f9cb8]">
        {nav.map((d, i) => (
          <button key={d} type="button" aria-label={["First", "Previous", "Next", "Last"][i]} className="flex flex-1 items-center justify-center">
            <svg viewBox="0 0 10 10" className="size-2.5" fill="#7a7896" stroke="#7a7896" aria-hidden="true">
              <path d={d} />
            </svg>
          </button>
        ))}
      </div>
      <button type="button" className="flex w-[51px] items-center justify-center pl-0.5 font-['Noto_Sans',sans-serif] font-bold">
        Model
      </button>
      <button type="button" className="flex w-[59px] items-center justify-center border-x border-[#b0b0b0] bg-[#d4d4d4] text-[#555]">
        3D Views
      </button>
      <button type="button" className="flex w-24 items-center border-r border-[#b0b0b0] bg-[#d4d4d4] pl-[9px] text-[#555]">
        Motion Study 1
      </button>
    </div>
  );
}

function StatusBar() {
  return (
    <footer className="flex h-3.5 shrink-0 items-center overflow-hidden bg-[#f6f6f6] pt-px text-[10px] leading-3 whitespace-nowrap text-[#666]">
      <span>SOLIDWORKS Premium 2016 x64 Edition</span>
      <div className="ml-auto flex h-full w-[218px] items-center">
        <span className="flex h-full w-[59px] items-center justify-center border-x border-[#d8d8d8]">Editing Part</span>
        <span className="ml-2 flex h-full w-[68px] items-center justify-center border-l border-[#e0e0e0] pl-4">MMGS</span>
        <svg viewBox="0 0 4 2" className="ml-1.5 h-0.5 w-1" aria-hidden="true">
          <path d="M0 2h4L2 0z" fill="#555" />
        </svg>
        <svg viewBox="0 0 12 12" className="mr-1 ml-auto size-3" aria-hidden="true">
          <path d="M1 7.500C1 5 5 1.500 8 1.500c3 0 3.500 2 2.500 4S6 11 3.500 11 1 9.500 1 7.500z" fill="#e3c92c" stroke="#7d6c12" />
          <path d="M3.500 7l4-4" stroke="#fbf3a8" strokeWidth="1.500" />
        </svg>
      </div>
    </footer>
  );
}

export default function App() {
  return (
    <div className="flex h-screen flex-col overflow-hidden bg-black py-4 font-['Open_Sans','Noto_Sans',sans-serif] text-[#444b52]">
      <TitleBar />
      <Ribbon />
      <div className="relative flex min-h-0 flex-1">
        <div className="flex min-w-0 flex-1 flex-col bg-white bg-[linear-gradient(to_bottom,transparent_55%,rgba(255,255,255,0.5)_63%,#ffffff_73%,#ffffff_86%,#f5f5fb_100%),radial-gradient(ellipse_36%_90%_at_84%_44%,#d5d8e5,#dee1eb_40%,rgba(240,241,247,0.6)_75%,rgba(255,255,255,0)),linear-gradient(to_bottom,#ffffff_20%,#f6f7fa_38%,#dddfe9_57%,#ffffff_73%)]">
          <TabRow />
          <div className="flex min-h-0 flex-1">
            <FeaturePanel />
            <Viewport />
          </div>
        </div>
        <div className="w-[5px] shrink-0 border-l border-[#c5d0d8] bg-[#f3f3f5]" />
        <TaskPane />
      </div>
      <BottomTabs />
      <StatusBar />
    </div>
  );
}
